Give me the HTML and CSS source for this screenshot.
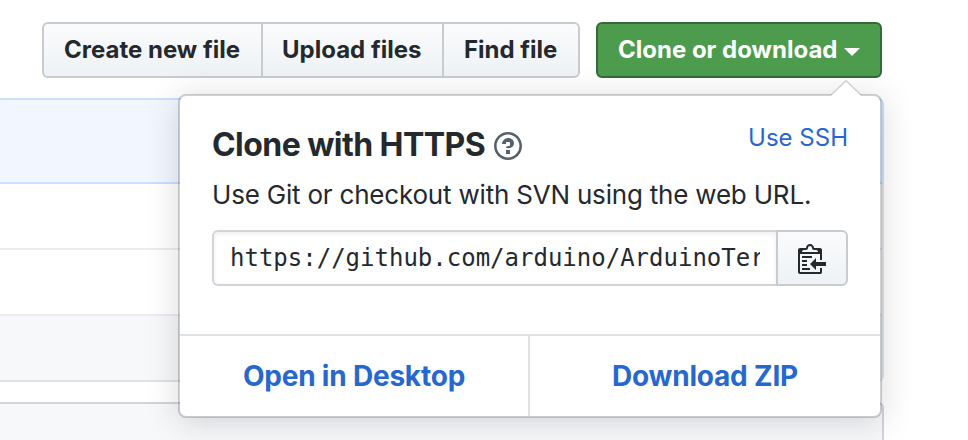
FILE: index.html
```html
<!DOCTYPE html>
<html lang="en">
<head>
<meta charset="utf-8">
<title>Clone or download</title>
<link rel="stylesheet" href="styles.css">
</head>
<body>
<div class="toolbar">
  <div class="btn-group">
    <button class="btn btn-create">Create new file</button>
    <button class="btn btn-upload">Upload files</button>
    <button class="btn btn-find">Find file</button>
  </div>
  <div class="clone">
    <button class="btn btn-primary">Clone or download<span class="caret"></span></button>
    <div class="popover">
      <svg class="pointer" width="32" height="16" viewBox="0 0 32 16"><path d="M0 16 16 0l16 16z" fill="#fff"/><path d="M.5 15.5 16 .7l15.500 14.800" fill="none" stroke="#1b1f23" stroke-opacity=".2" stroke-width="1.400"/></svg>
      <div class="popover-body">
        <div class="heading">
          <h4>Clone with HTTPS</h4>
          <svg class="help" width="28" height="32" viewBox="0 0 14 16"><path fill="#586069" fill-rule="evenodd" d="M6 10h2v2H6v-2zm4-3.500C10 8.640 8 9 8 9H6c0-.55.45-1 1-1h.5c.28 0 .5-.22.5-.5v-1c0-.28-.22-.5-.5-.5h-1c-.28 0-.5.22-.5.5V7H4c0-1.500 1.500-3 3-3s3 1 3 2.500zM7 2.300c3.140 0 5.700 2.560 5.700 5.700s-2.560 5.700-5.700 5.700A5.710 5.710 0 0 1 1.300 8c0-3.140 2.560-5.700 5.700-5.700zM7 1C3.140 1 0 4.140 0 8s3.140 7 7 7 7-3.140 7-7-3.140-7-7-7z"/></svg>
          <a class="ssh">Use SSH</a>
        </div>
        <p>Use Git or checkout with SVN using the web URL.</p>
        <div class="field">
          <div class="url"><span>https://github.com/arduino/ArduinoTer</span></div>
          <button class="btn copy" aria-label="Copy"><svg width="28" height="32" viewBox="0 0 14 16"><path fill="#24292e" fill-rule="evenodd" d="M2 13h4v1H2v-1zm5-6H2v1h5V7zm2 3V8l-3 3 3 3v-2h5v-2H9zM4.500 9H2v1h2.500V9zM2 12h2.500v-1H2v1zm9 1h1v2c-.02.28-.11.52-.3.7-.19.18-.42.28-.7.3H1c-.55 0-1-.45-1-1V4c0-.55.45-1 1-1h3c0-1.110.89-2 2-2 1.110 0 2 .89 2 2h3c.55 0 1 .45 1 1v5h-1V6H1v9h10v-2zM2 5h8c0-.55-.45-1-1-1H8c-.55 0-1-.45-1-1s-.45-1-1-1-1 .45-1 1-.45 1-1 1H3c-.55 0-1 .45-1 1z"/></svg></button>
        </div>
      </div>
      <div class="actions">
        <a class="desktop">Open in Desktop</a>
        <a class="zip">Download ZIP</a>
      </div>
    </div>
  </div>
</div>
<div class="commit"></div>
<div class="files">
  <div class="row"></div>
  <div class="row"></div>
  <div class="row row-hover"></div>
</div>
<div class="readme"></div>
</body>
</html>
```
FILE: styles.css
```css
* { box-sizing: border-box; }
body {
  margin: 0;
  height: 440px;
  overflow: hidden;
  background: #fff;
  color: #24292e;
  font: 24px/36px Inter, "Liberation Sans", sans-serif;
}
.toolbar {
  display: flex;
  gap: 16px;
  padding: 22px 0 20px 42px;
}
.btn-group { display: flex; }
.btn {
  display: flex;
  align-items: center;
  height: 56px;
  margin: 0;
  padding: 0 0 0 20px;
  border: 2px solid #c9cbce;
  border-radius: 6px;
  background: linear-gradient(#fafbfc, #eff3f6 90%);
  color: #24292e;
  font: 700 24px/36px Inter, "Liberation Sans", sans-serif;
  white-space: nowrap;
}
.btn-create { width: 219px; border-radius: 6px 0 0 6px; border-right: 0; }
.btn-upload { width: 181px; border-radius: 0; border-right: 0; padding-left: 19px; }
.btn-find { width: 138px; border-radius: 0 6px 6px 0; }
.clone { position: relative; }
.btn-primary {
  width: 286px;
  border-color: #356a38;
  background: #4d9c4e;
  color: #fff;
}
.caret {
  margin: 4px 0 0 7px;
  border: 8px solid transparent;
  border-top-color: #fff;
  border-bottom: 0;
}
.popover {
  position: absolute;
  top: 72px;
  right: 0;
  z-index: 2;
  width: 704px;
  height: 324px;
  border: 2px solid rgba(27, 31, 35, .2);
  border-radius: 8px;
  background: #fff;
  background-clip: padding-box;
  box-shadow: 0 4px 32px rgba(27, 31, 35, .17);
}
.pointer { position: absolute; top: -16px; right: 18px; }
.popover-body { height: 238px; padding: 32px 32px 0; }
.heading { display: flex; height: 34px; }
h4 { width: 273px; margin: 0; font-size: 32px; line-height: 34px; font-weight: 700; letter-spacing: -.56px; white-space: nowrap; }
.help { margin: 2px 0 0 9px; }
.ssh { margin: -8px 0 0 auto; color: #2768cf; }
p { margin: 15px 0 17px; font-size: 26px; letter-spacing: -.2px; white-space: nowrap; }
.field { display: flex; }
.url {
  width: 564px;
  height: 56px;
  padding: 8px 16px;
  border: 2px solid #d1d5da;
  border-right: 0;
  border-radius: 6px 0 0 6px;
  box-shadow: inset 0 2px 4px rgba(27, 31, 35, .075);
  font: 24px/36px "DejaVu Sans Mono", monospace;
  white-space: nowrap;
}
.url span { display: block; overflow: hidden; }
.copy { width: 72px; border-radius: 0 6px 6px 0; padding: 0 0 0 20px; }
.actions {
  display: flex;
  height: 82px;
  border-top: 2px solid #dfe2e5;
  color: #2768cf;
  font-size: 28px;
  font-weight: 700;
  letter-spacing: -.2px;
}
.actions a { display: flex; align-items: center; justify-content: center; white-space: nowrap; }
.desktop { width: 350px; border-right: 2px solid #dfe2e5; }
.zip { width: 350px; }
.commit {
  width: 888px;
  height: 86px;
  margin-left: -4px;
  border: 2px solid #c8e1ff;
  border-radius: 6px 6px 0 0;
  background: #f2f7ff;
}
.files {
  width: 884px;
  height: 198px;
  border: 2px solid #dfe2e5;
  border-top: 0;
  border-left: 0;
  border-radius: 0 0 6px 0;
}
.row { height: 64px; }
.row + .row { height: 66px; border-top: 2px solid #eaecef; }
.row-hover { background: #f6f8fa; }
.readme {
  width: 884px;
  height: 60px;
  margin-top: 20px;
  border: 2px solid #d1d5da;
  border-left: 0;
  border-radius: 0 6px 0 0;
  background: #f6f8fa;
}
```
